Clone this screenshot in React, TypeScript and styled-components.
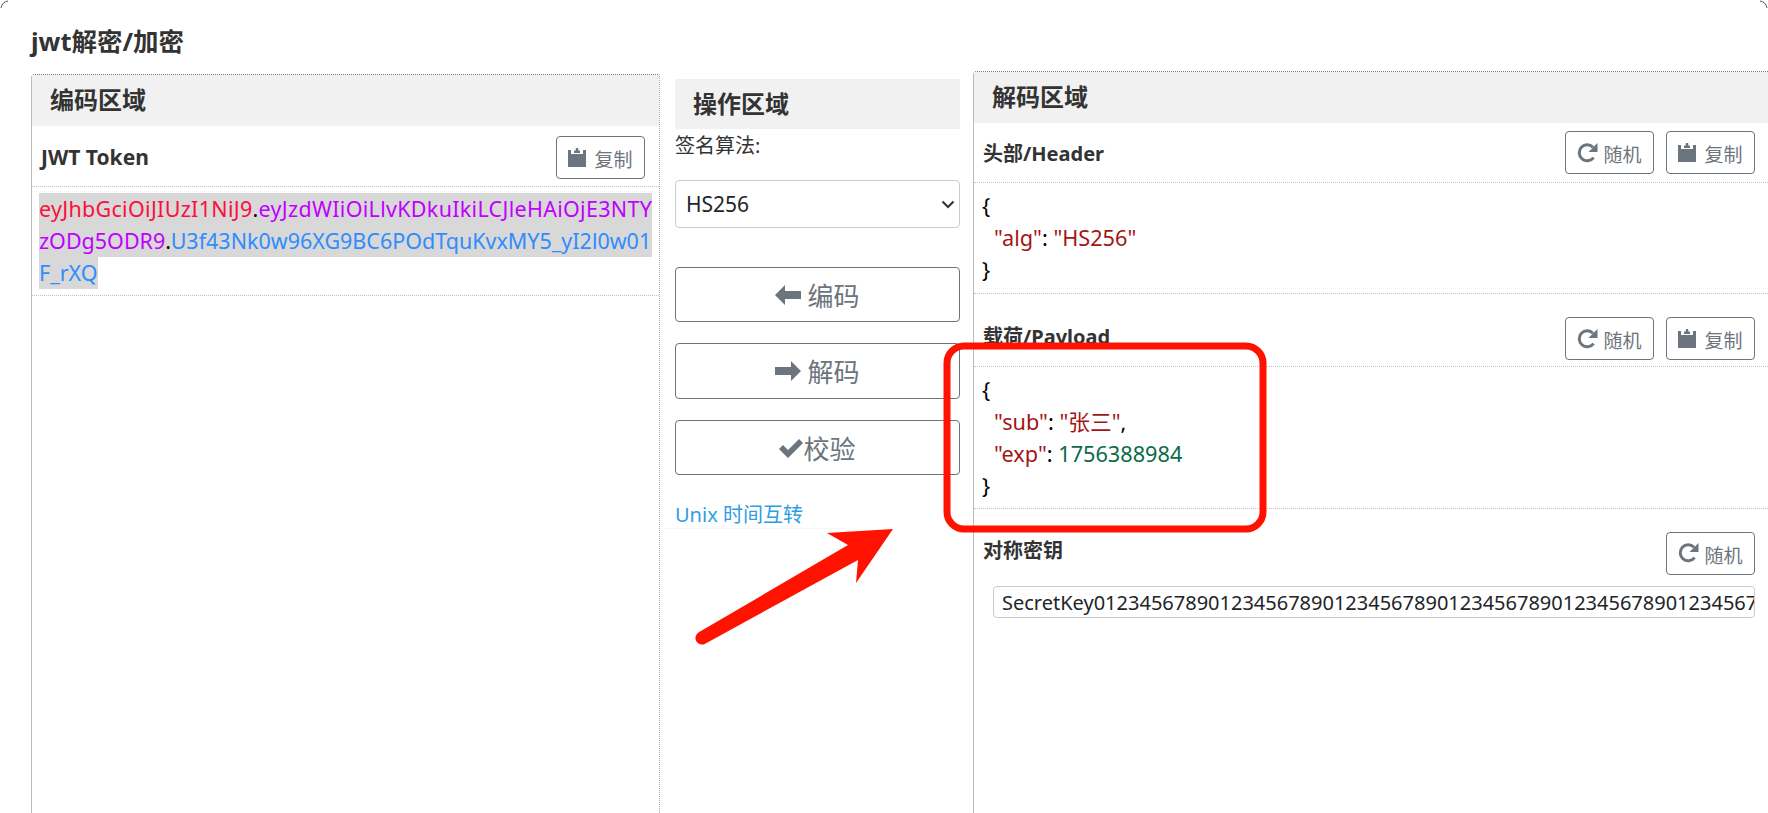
import React from "react";
import styled, { createGlobalStyle } from "styled-components";

const GlobalStyle = createGlobalStyle`
  html, body {
    margin: 0;
    padding: 0;
    height: 100%;
    background: #fff;
  }
  body {
    font-family: "Noto Sans", "Noto Sans CJK SC", sans-serif;
    font-size: 20px;
    color: #212529;
    overflow: hidden;
  }
  * {
    box-sizing: border-box;
  }
`;

const Page = styled.div`
  position: relative;
  width: 1768px;
  height: 813px;
  overflow: hidden;
`;

const Title = styled.h1`
  margin: 0;
  height: 71px;
  padding: 23px 0 0 31px;
  font-size: 25.5px;
  line-height: 36px;
  font-weight: 700;
  color: #333;
`;

const Columns = styled.div`
  display: flex;
  height: 742px;
  padding-left: 31px;
`;

const Panel = styled.section<{ $width?: number; $top?: number }>`
  ${(p) => (p.$width ? `width: ${p.$width}px;` : "flex: 1;")}
  margin-top: ${(p) => p.$top || 0}px;
  border-top: 1px dotted #777;
  border-left: 1px solid #bbb;
`;

const LeftPanel = styled(Panel)`
  border-right: 1px dotted #aaa;
  border-top-left-radius: 4px;
`;

const RightPanel = styled(Panel)`
  margin-left: 13px;
  border-top-left-radius: 4px;
`;

const MiddleColumn = styled.section`
  width: 285px;
  margin: 8px 0 0 15px;
`;

const PanelHeader = styled.h2<{ $height: number; $pad: number }>`
  margin: 0;
  height: ${(p) => p.$height}px;
  padding-left: ${(p) => p.$pad}px;
  background: #f1f1f1;
  font-size: 24px;
  font-weight: 700;
  line-height: ${(p) => p.$height - 1}px;
  color: #333;
`;

const Row = styled.div<{ $height: number; $top?: number; $right?: number; $border?: boolean }>`
  display: flex;
  align-items: center;
  justify-content: space-between;
  height: ${(p) => p.$height}px;
  padding: ${(p) => p.$top || 0}px ${(p) => p.$right || 13}px 0 9px;
  ${(p) => (p.$border ? "border-bottom: 1px dotted #c4c4c4;" : "")}
`;

const RowLabel = styled.span<{ $size?: number; $raise?: number }>`
  margin-bottom: ${(p) => p.$raise || 0}px;
  font-size: ${(p) => p.$size || 20}px;
  font-weight: 700;
  color: #333;
`;

const RowButtons = styled.div`
  display: flex;
  gap: 12px;
`;

const ToolButton = styled.button<{ $gap: number }>`
  display: inline-flex;
  align-items: center;
  justify-content: center;
  gap: ${(p) => p.$gap}px;
  width: 89px;
  height: 43px;
  padding: 3px 0 0;
  border: 1px solid #6c757d;
  border-radius: 4px;
  background: transparent;
  color: #6c757d;
  font: inherit;
  font-size: 19px;
  svg {
    margin-top: -4px;
  }
`;

const TokenBox = styled.div`
  height: 109px;
  padding: 6px 0 0 7px;
  border-bottom: 1px dotted #c4c4c4;
`;

const TokenLine = styled.div<{ $fit?: boolean; $spacing?: number }>`
  width: ${(p) => (p.$fit ? "59px" : "613px")};
  height: 32px;
  overflow: hidden;
  background: #d8d8d8;
  font-size: 21.5px;
  line-height: 32px;
  letter-spacing: ${(p) => p.$spacing || 0}px;
  color: #000;
  white-space: nowrap;
`;

const Part = styled.span<{ $color: string }>`
  color: ${(p) => p.$color};
`;

const CodeBox = styled.div<{ $height: number }>`
  height: ${(p) => p.$height}px;
  padding: 7px 0 0 8px;
  border-bottom: 1px dotted #c4c4c4;
  font-size: 21.7px;
  line-height: 32px;
  color: #000;
`;

const CodeLine = styled.div<{ $indent?: boolean }>`
  padding-left: ${(p) => (p.$indent ? 12 : 0)}px;
`;

const Str = styled.span`
  color: #a31515;
`;

const Num = styled.span`
  color: #0b6b4a;
`;

const FieldLabel = styled.label`
  display: block;
  height: 51px;
  font-size: 20px;
  line-height: 33px;
  color: #333;
`;

const AlgorithmSelect = styled.div`
  position: relative;
  height: 48px;
  margin-bottom: 39px;
  svg {
    position: absolute;
    right: 5px;
    top: 20px;
    pointer-events: none;
  }
`;

const Select = styled.select`
  width: 100%;
  height: 100%;
  padding: 0 10px;
  appearance: none;
  border: 1px solid #ccc;
  border-radius: 4px;
  background: #fff;
  color: #212529;
  font: inherit;
  font-size: 21px;
`;

const ActionButton = styled.button<{ $height: number; $gap: number; $last?: boolean }>`
  display: flex;
  align-items: center;
  justify-content: center;
  gap: ${(p) => p.$gap}px;
  width: 100%;
  height: ${(p) => p.$height}px;
  margin-bottom: ${(p) => (p.$last ? 0 : 21)}px;
  padding: 0;
  border: 1px solid #6c757d;
  border-radius: 4px;
  background: transparent;
  color: #6c757d;
  font: inherit;
  font-size: 26px;
`;

const LinkRow = styled.div`
  height: 54px;
  margin: 0 115px 0 -13px;
  padding: 26px 0 0 13px;
  border-bottom: 1px solid #f6f6f6;
`;

const TimeLink = styled.a`
  color: #2d9ee6;
  font-size: 20px;
  line-height: 28px;
  text-decoration: none;
`;

const KeyInputWrap = styled.div`
  padding: 0 13px 0 19px;
`;

const KeyInput = styled.input`
  width: 100%;
  height: 32px;
  padding: 0 0 0 8px;
  border: 1px solid #ccc;
  border-radius: 4px;
  background: #fff;
  color: #212529;
  font: inherit;
  font-size: 20px;
  outline: none;
`;

const Annotation = styled.svg`
  position: absolute;
  inset: 0;
  pointer-events: none;
`;

const ClipboardIcon = () => (
  <svg width="18" height="20" viewBox="0 0 18 20" fill="currentColor">
    <path d="M0 3h3v4h12V3h3v17H0z" />
    <path d="M6 6V3.5h1.8V1h2.4v2.5H12V6z" />
  </svg>
);

const RefreshIcon = () => (
  <svg width="21" height="21" viewBox="0 0 21 21" fill="none">
    <path
      d="M16.6 15.6A8 8 0 1 1 16 5.2"
      stroke="currentColor"
      strokeWidth="3"
    />
    <path d="M20.5 1v9h-9z" fill="currentColor" />
  </svg>
);

const ArrowLeftIcon = () => (
  <svg width="26" height="20" viewBox="0 0 26 20" fill="currentColor">
    <path d="M0 10L10 0v6h16v8H10v6z" />
  </svg>
);

const ArrowRightIcon = () => (
  <svg width="26" height="20" viewBox="0 0 26 20" fill="currentColor">
    <path d="M26 10L16 0v6H0v8h16v6z" />
  </svg>
);

const CheckIcon = () => (
  <svg width="24" height="20" viewBox="0 0 24 20" fill="currentColor">
    <path d="M0 11l4-4 5 5L20 1l4 4L9 20z" />
  </svg>
);

const ChevronIcon = () => (
  <svg width="14" height="9" viewBox="0 0 14 9" fill="none">
    <path d="M1.5 1.5L7 7l5.5-5.5" stroke="#343a40" strokeWidth="2.2" />
  </svg>
);

const CopyButton = () => (
  <ToolButton $gap={8}>
    <ClipboardIcon />
    复制
  </ToolButton>
);

const RandomButton = () => (
  <ToolButton $gap={5}>
    <RefreshIcon />
    随机
  </ToolButton>
);

const App = () => {
  return (
    <Page>
      <GlobalStyle />
      <Title>jwt解密/加密</Title>
      <Columns>
        <LeftPanel $width={629} $top={3}>
          <PanelHeader $height={51} $pad={18}>
            编码区域
          </PanelHeader>
          <Row $height={61} $top={2} $right={14} $border>
            <RowLabel $size={21}>JWT Token</RowLabel>
            <RowButtons>
              <CopyButton />
            </RowButtons>
          </Row>
          <TokenBox>
            <TokenLine $spacing={0.3}>
              <Part $color="#fb0f3b">eyJhbGciOiJIUzI1NiJ9</Part>.
              <Part $color="#c000ff">eyJzdWIiOiLlvKDkuIkiLCJleHAiOjE3NTY</Part>
            </TokenLine>
            <TokenLine>
              <Part $color="#c000ff">zODg5ODR9</Part>.
              <Part $color="#2f8cff">U3f43Nk0w96XG9BC6POdTquKvxMY5_yI2l0w01</Part>
            </TokenLine>
            <TokenLine $fit>
              <Part $color="#2f8cff">F_rXQ</Part>
            </TokenLine>
          </TokenBox>
        </LeftPanel>
        <MiddleColumn>
          <PanelHeader $height={50} $pad={18}>
            操作区域
          </PanelHeader>
          <FieldLabel>签名算法:</FieldLabel>
          <AlgorithmSelect>
            <Select defaultValue="HS256">
              <option>HS256</option>
            </Select>
            <ChevronIcon />
          </AlgorithmSelect>
          <ActionButton $height={55} $gap={6}>
            <ArrowLeftIcon />
            编码
          </ActionButton>
          <ActionButton $height={56} $gap={6}>
            <ArrowRightIcon />
            解码
          </ActionButton>
          <ActionButton $height={55} $gap={0} $last>
            <CheckIcon />
            校验
          </ActionButton>
          <LinkRow>
            <TimeLink>Unix 时间互转</TimeLink>
          </LinkRow>
        </MiddleColumn>
        <RightPanel>
          <PanelHeader $height={51} $pad={18}>
            解码区域
          </PanelHeader>
          <Row $height={60} $border>
            <RowLabel>头部/Header</RowLabel>
            <RowButtons>
              <RandomButton />
              <CopyButton />
            </RowButtons>
          </Row>
          <CodeBox $height={111}>
            <CodeLine>{"{"}</CodeLine>
            <CodeLine $indent>
              <Str>"alg"</Str>: <Str>"HS256"</Str>
            </CodeLine>
            <CodeLine>{"}"}</CodeLine>
          </CodeBox>
          <Row $height={73} $top={17} $border>
            <RowLabel $raise={7}>载荷/Payload</RowLabel>
            <RowButtons>
              <RandomButton />
              <CopyButton />
            </RowButtons>
          </Row>
          <CodeBox $height={142}>
            <CodeLine>{"{"}</CodeLine>
            <CodeLine $indent>
              <Str>"sub"</Str>: <Str>"张三"</Str>,
            </CodeLine>
            <CodeLine $indent>
              <Str>"exp"</Str>: <Num>1756388984</Num>
            </CodeLine>
            <CodeLine>{"}"}</CodeLine>
          </CodeBox>
          <Row $height={77} $top={11}>
            <RowLabel $raise={7}>对称密钥</RowLabel>
            <RowButtons>
              <RandomButton />
            </RowButtons>
          </Row>
          <KeyInputWrap>
            <KeyInput
              readOnly
              value="SecretKey012345678901234567890123456789012345678901234567890123456789012345678901234567890"
            />
          </KeyInputWrap>
        </RightPanel>
      </Columns>
      <Annotation width="1768" height="813" viewBox="0 0 1768 813">
        <rect
          x="947"
          y="346"
          width="316"
          height="183"
          rx="17"
          fill="none"
          stroke="#ff1200"
          strokeWidth="7"
        />
        <path
          d="M698.8 632.3L848 545L827 533L893 529L856 583L858 560L705.2 643.7A6.5 6.5 0 0 1 698.8 632.3z"
          fill="#ff1200"
        />
        <path d="M1 8Q2 2 8 1" stroke="#555" fill="none" />
        <path d="M1760 1Q1766 2 1767 8" stroke="#555" fill="none" />
      </Annotation>
    </Page>
  );
};

export default App;
